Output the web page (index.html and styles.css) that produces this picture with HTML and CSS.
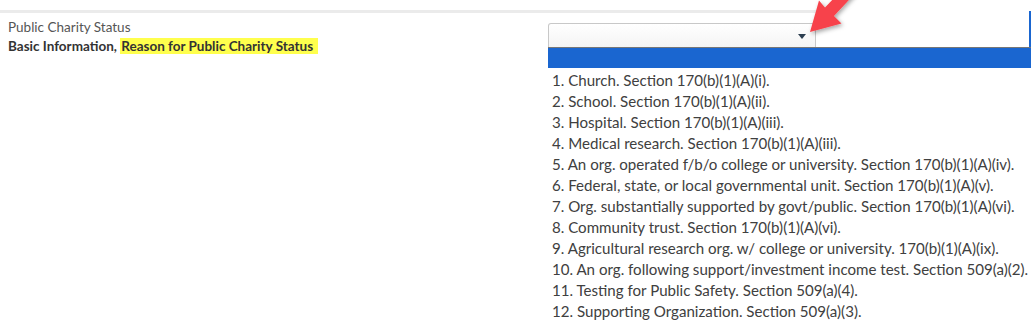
FILE: index.html
```html
<!DOCTYPE html>
<html lang="en">

<head>
    <meta charset="utf-8">
    <title>Public Charity Status</title>
    <link rel="stylesheet" href="styles.css">
</head>

<body>
    <div class="topbar"></div>
    <div class="felt">
        <div class="etiket">
            <p class="navn">Public Charity Status</p>
            <p class="sti">Basic Information, <mark>Reason for Public Charity Status</mark></p>
        </div>
        <div class="vaelger">
            <div class="boks">
                <span class="pil-ned"></span>
            </div>
            <div class="valgt-linje"></div>
            <ul class="liste">
                <li>1. Church. Section 170(b)(1)(A)(i).</li>
                <li>2. School. Section 170(b)(1)(A)(ii).</li>
                <li>3. Hospital. Section 170(b)(1)(A)(iii).</li>
                <li>4. Medical research. Section 170(b)(1)(A)(iii).</li>
                <li>5. An org. operated f/b/o college or university. Section 170(b)(1)(A)(iv).</li>
                <li>6. Federal, state, or local governmental unit. Section 170(b)(1)(A)(v).</li>
                <li>7. Org. substantially supported by govt/public. Section 170(b)(1)(A)(vi).</li>
                <li>8. Community trust. Section 170(b)(1)(A)(vi).</li>
                <li>9. Agricultural research org. w/ college or university. 170(b)(1)(A)(ix).</li>
                <li>10. An org. following support/investment income test. Section 509(a)(2).</li>
                <li>11. Testing for Public Safety. Section 509(a)(4).</li>
                <li>12. Supporting Organization. Section 509(a)(3).</li>
            </ul>
        </div>
    </div>

    <!-- rød pil lagt oven på skærmbilledet -->
    <svg class="markering" width="80" height="50" viewBox="0 0 80 50">
        <defs>
            <filter id="skygge" x="-30%" y="-30%" width="160%" height="160%">
                <feDropShadow dx="1.5" dy="2" stdDeviation="2" flood-color="#000" flood-opacity="0.35"/>
            </filter>
        </defs>
        <polygon filter="url(#skygge)" fill="#f7434b"
            points="20,32 51.5,23.5 44,16 71.2,-13.2 62.6,-21.4 35,7.6 29,0.5"/>
    </svg>
</body></html>
```

FILE: styles.css
```css
* {
    margin: 0;
    padding: 0;
    box-sizing: border-box;
}

body {
    font-family: Lato, "Liberation Sans", sans-serif;
    color: #333;
    background: #fff;
    width: 1031px;
    height: 320px;
    overflow: hidden;
    position: relative;
}

.topbar {
    margin-top: 10px;
    width: 835px;
    height: 3px;
    background-color: #ebebeb;
}

.felt {
    display: flex;
}

.etiket {
    width: 548px;
    padding: 5px 0 0 8px;
    font-size: 13.5px;
    line-height: 18.5px;
}

.navn {
    color: #555;
}

.sti {
    font-weight: bold;
    color: #333;
}

mark {
    background-color: #ffff4d;
    color: #333;
    padding: 0 5px 0 1px;
}

.vaelger {
    flex: 1;
    border-right: 2px solid #1a66d0;
    padding-top: 12px;
    margin-top: -2px;
}

.boks {
    width: 268px;
    height: 24px;
    border: 1px solid #c8c8c8;
    border-bottom: none;
    border-radius: 3px 3px 0 0;
    background: linear-gradient(#fff, #f4f4f4);
    position: relative;
}

.pil-ned {
    position: absolute;
    right: 9px;
    top: 10px;
    border-left: 4px solid transparent;
    border-right: 4px solid transparent;
    border-top: 5px solid #2c3e50;
}

.valgt-linje {
    height: 21px;
    border-top: 1px solid #777;
    background-color: #1a66d0;
    margin-right: -2px;
}

.liste {
    list-style: none;
    background: #fff;
    margin-right: -2px;
    padding: 2px 0 0 4px;
    font-size: 15.1px;
    line-height: 21px;
    color: #404040;
}

.markering {
    position: absolute;
    left: 790px;
    top: 0;
    overflow: visible;
}
```
